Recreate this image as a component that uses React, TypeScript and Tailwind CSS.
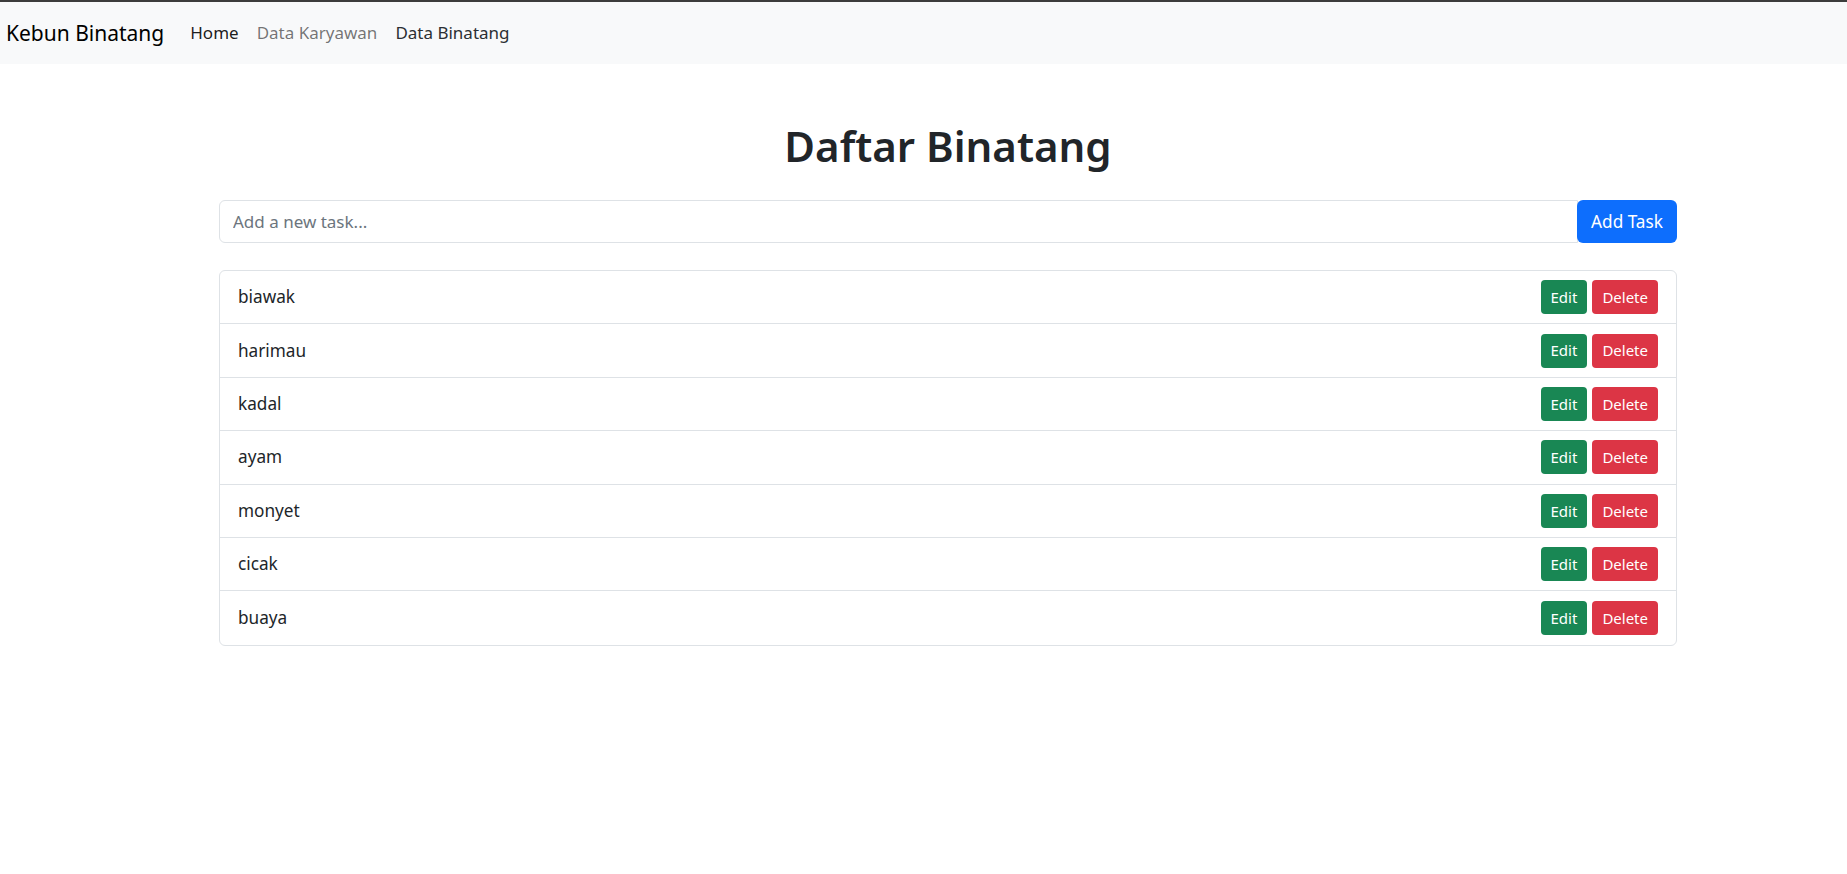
const animals = ["biawak", "harimau", "kadal", "ayam", "monyet", "cicak", "buaya"];

function Navbar() {
  return (
    <nav className="bg-[#f8f9fa] border-t-2 border-[#3c3c3c]">
      <div className="flex items-center h-[62px] pl-[6px]">
        <a className="text-[21px] text-black mr-[17px] leading-[33px]">Kebun Binatang</a>
        <ul className="flex items-center text-[17px]">
          <li className="px-[9px] text-black/90">Home</li>
          <li className="px-[9px] text-black/55">Data Karyawan</li>
          <li className="px-[9px] text-[#2b2f33]">Data Binatang</li>
        </ul>
      </div>
    </nav>
  );
}

function AnimalRow({ name, last }: { name: string; last: boolean }) {
  return (
    <li
      className={`flex items-center justify-between h-[53.4px] pl-[18px] pr-[18px] ${
        last ? "" : "border-b border-[#dee2e6]"
      }`}
    >
      <span className="text-[17.2px] text-[#212529]">{name}</span>
      <div className="flex gap-[5px]">
        <button className="h-[34px] px-[10px] rounded-[4px] bg-[#198754] text-white text-[15px]">
          Edit
        </button>
        <button className="h-[34px] px-[10px] rounded-[4px] bg-[#dc3545] text-white text-[15px]">
          Delete
        </button>
      </div>
    </li>
  );
}

export default function App() {
  return (
    <div className="min-h-screen bg-white font-['Noto_Sans',sans-serif] text-[#212529]">
      <Navbar />

      <main className="ml-[219px] w-[1458px]">
        <h1 className="mt-[55px] h-[53px] leading-[53px] text-center text-[42px] font-semibold text-[#212529]">
          Daftar Binatang
        </h1>

        {/* input group */}
        <div className="flex mt-[28px] h-[43px]">
          <input
            className="flex-1 border border-[#dee2e6] rounded-l-[6px] px-[13px] text-[17px] outline-none placeholder:text-[#6c757d]"
            placeholder="Add a new task..."
          />
          <button className="w-[100px] rounded-[6px] -ml-px bg-[#0d6efd] text-white text-[17.2px]">
            Add Task
          </button>
        </div>

        <ul className="mt-[27px] border border-[#dee2e6] rounded-[6px]">
          {animals.map((a, i) => (
            <AnimalRow key={a} name={a} last={i === animals.length - 1} />
          ))}
        </ul>
      </main>
    </div>
  );
}
